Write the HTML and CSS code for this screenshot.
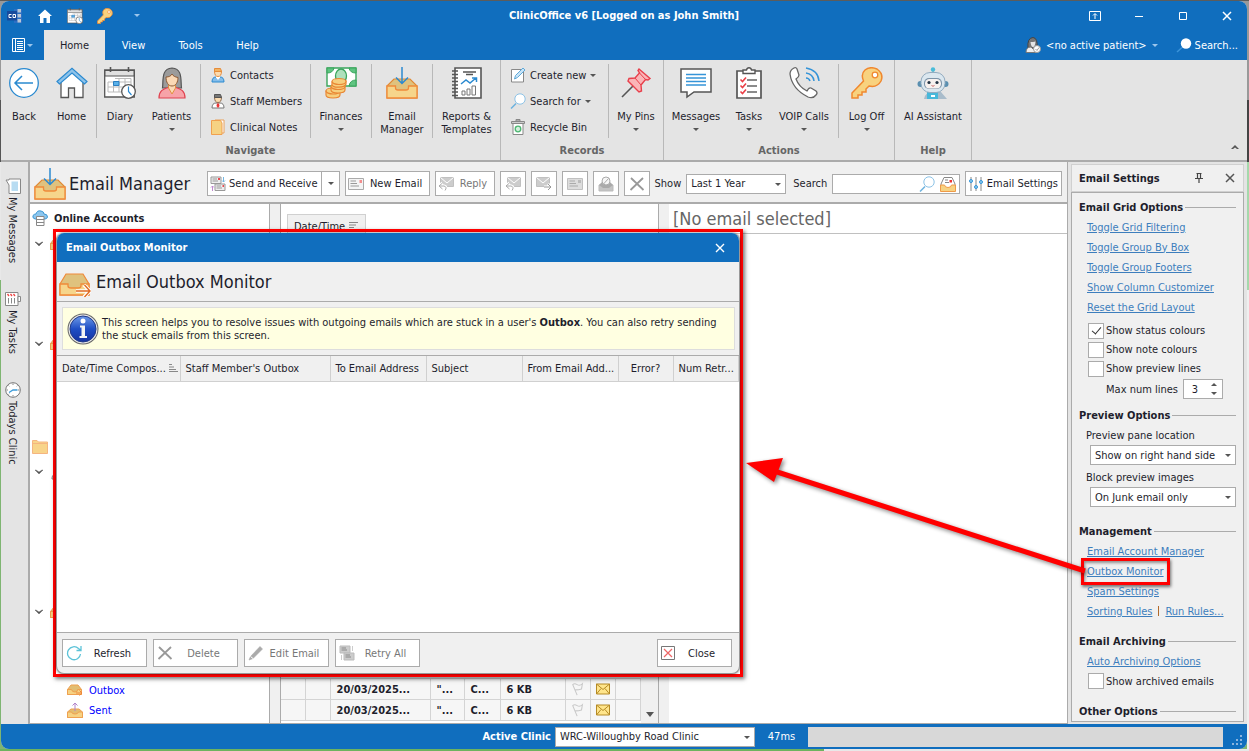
FILE: index.html
```html
<!DOCTYPE html>
<html lang="en">
<head>
<meta charset="utf-8">
<title>ClinicOffice v6</title>
<link rel="stylesheet" href="styles.css">
</head>
<body>
<svg class="sprite" aria-hidden="true">
  <symbol id="i-home" viewBox="0 0 32 32"><path d="M5 14V30.500H12.500V21H18.500V30.500H27V14L16 4Z" fill="#fff" stroke="#555" stroke-width="1.300"/><path d="M1 14.500L16 1.300L31 14.500L28.500 17L16 6L3.500 17Z" fill="#8ec3ea" stroke="#2b8ad0" stroke-width="1.200"/></symbol>
  <symbol id="i-back" viewBox="0 0 32 32"><circle cx="16" cy="16" r="14.300" fill="#fff" stroke="#2b8ad0" stroke-width="1.300"/><path d="M25 16H7M14 9L7 16L14 23" fill="none" stroke="#2b8ad0" stroke-width="1.500"/></symbol>
  <symbol id="i-diary" viewBox="0 0 32 32"><path d="M.7 3H30.300V30H.7Z" fill="#fff" stroke="#555" stroke-width="1.300"/><path d="M1 3.500H30V9H1Z" fill="#e0e0e0" stroke="#555"/><path d="M6.500 0V5M24.500 0V5" stroke="#555" stroke-width="1.600"/><path d="M11 11.500H27V25H4V15H27M4 20H27M4 25M9.500 15V25M15 11.500V25M21 11.500V25" fill="none" stroke="#bbb"/><path d="M9.500 14.500H15V18.500H9.500Z" fill="#5ab0e8" stroke="#2b7fc0"/><circle cx="24.500" cy="24.500" r="6.800" fill="#fff" stroke="#555" stroke-width="1.300"/><path d="M24.500 19.500V24.500L27.500 28" fill="none" stroke="#2b8ad0" stroke-width="1.200"/></symbol>
  <symbol id="i-patient" viewBox="0 0 32 32"><path d="M6.500 21C7.500 14 5 1.500 16 1C27 1.500 24.500 14 25.500 21Z" fill="#9b9b9b" stroke="#555" stroke-width="1.200"/><path d="M3 31C3 24 7 22 12 20.500H20C25 22 29 24 29 31Z" fill="#f7a3a8" stroke="#e04350" stroke-width="1.200"/><path d="M12.500 17V21L16 27L19.500 21V17Z" fill="#fbd9b5" stroke="#e0903f"/><path d="M10 10C13 10 15 9 16 7C17 9 19 10 22 10.500C22 15 20 19 16 19S10 15 10 10Z" fill="#fbd9b5" stroke="#8d5a35"/></symbol>
  <symbol id="i-money" viewBox="0 0 32 32"><path d="M2 1H31V19H2Z" fill="#fff" stroke="#3aa55c" stroke-width="1.400"/><path d="M2 1H9Q8 6 2 6ZM31 1H24Q25 6 31 6ZM31 19H24Q25 13 31 13Z" fill="#5fc481" stroke="#3aa55c"/><ellipse cx="16" cy="9" rx="5.500" ry="7" fill="#aee0bc" stroke="#3aa55c" stroke-width="1.300"/><g fill="#f6cf7e" stroke="#e98734" stroke-width="1.200"><path d="M1 24V28C1 32 15 32 15 28V24Z"/><ellipse cx="8" cy="24" rx="7" ry="3"/><path d="M6 20V23C6 27 20 27 20 23V20Z"/><ellipse cx="13" cy="19.500" rx="7" ry="3"/><path d="M7 15V18C8 21 20 21 21 17V14Z"/><ellipse cx="14" cy="14.500" rx="7" ry="3"/></g></symbol>
  <symbol id="i-inbox" viewBox="0 0 32 32"><path d="M1 19L8 12H24L31 19V31H1Z" fill="#dfc27e" stroke="#e08a35" stroke-width="1.200"/><path d="M1 19H9.500V21Q9.500 23 12 23H20Q22.500 23 22.500 21V19H31V31H1Z" fill="#f6d58b" stroke="#f08a3a" stroke-width="1.300"/><path d="M16 0V16M10 10.500L16 16.500L22 10.500" fill="none" stroke="#2b8ad0" stroke-width="1.500"/></symbol>
  <symbol id="i-outbox" viewBox="0 0 32 26"><path d="M1 11L7 1H24L30 11V22H1Z" fill="#dfc27e" stroke="#f08a3a" stroke-width="1.200"/><path d="M1 11H9V13Q9 15 12 15H19Q22 15 22 13V11H30V22H1Z" fill="#f6d58b" stroke="#f08a3a" stroke-width="1.300"/><path d="M17 18H31M25 12L31 18L25 24" fill="none" stroke="#fff" stroke-width="3.500"/><path d="M17 18H31M25.500 12L31 18L25.500 24" fill="none" stroke="#e06a20" stroke-width="1.400"/></symbol>
  <symbol id="i-report" viewBox="0 0 32 32"><path d="M4 1H30V31H4Z" fill="#fff" stroke="#555" stroke-width="1.600"/><path d="M1 4H7M1 7.500H7M1 11H7M1 14.500H7M1 18H7M1 21.500H7M1 25H7M1 28.500H7" stroke="#555" stroke-width="1.500"/><path d="M12 5H25M15 7.500H22" stroke="#555" stroke-width="1.300"/><path d="M10 17L15 13L19 16L25 11M21 11H25.500V15" fill="none" stroke="#2b8ad0" stroke-width="1.500"/><path d="M11 24H14V28H11ZM16 22H19V28H16ZM21 19H24.500V28H21Z" fill="#fff" stroke="#777"/></symbol>
  <symbol id="i-pin" viewBox="0 0 32 32"><path d="M13 19L2 30" stroke="#555" stroke-width="1.600"/><path d="M19 2L30 11.500L28 13L25.500 12.500L21 18L21.500 24L19 25L8 14L9 11.500L15 11L19.500 6L18 3.500Z" fill="#fbb5b7" stroke="#e8404c" stroke-width="1.400"/><path d="M15 11L21 18M19.500 6L25.500 12.500" stroke="#e8404c"/></symbol>
  <symbol id="i-message" viewBox="0 0 32 32"><path d="M1 2H31V25H14L7 30V25H1Z" fill="#fff" stroke="#555" stroke-width="1.500"/><path d="M6 7.500H26M6 11H26M6 14.500H26M6 18H26" stroke="#3594d8" stroke-width="1.300"/></symbol>
  <symbol id="i-tasks" viewBox="0 0 32 32"><path d="M4 4H28V31H4Z" fill="#fff" stroke="#555" stroke-width="1.700"/><path d="M10 6.500V3H13.500Q14 .7 16 .7T18.500 3H22V6.500Z" fill="#fff" stroke="#555" stroke-width="1.400"/><path d="M14 13H24M14 19H24M14 25H24" stroke="#666" stroke-width="1.500"/><path d="M7.500 12.500L9.500 14.500L13 10.500M7.500 18.500L9.500 20.500L13 16.500M7.500 24.500L9.500 26.500L13 22.500" fill="none" stroke="#ea3f46" stroke-width="1.600"/></symbol>
  <symbol id="i-phone" viewBox="0 0 32 32"><path d="M2 7Q2 3 6 1Q8 0 9 2L11 8Q11 10 8 12Q11 20 19 24Q21 20 23 21L28 24Q30 26 28 28Q25 32 20 30Q4 22 2 7Z" fill="#fff" stroke="#666" stroke-width="1.300"/><path d="M18 1Q30 3 31 14M18 6Q25 7 26 14M18 11Q21 11 22 14" fill="none" stroke="#3594d8" stroke-width="1.500"/></symbol>
  <symbol id="i-key" viewBox="0 0 32 32"><path d="M12.500 14Q9.500 7 14 3Q19-1 26 2Q33 7 30 14Q26 21 18 19L15 22V25H11V28H7V31H1V26Z" fill="#f8d27f" stroke="#f0882f" stroke-width="1.500"/><circle cx="24" cy="8" r="2.800" fill="#fff" stroke="#f0882f" stroke-width="1.300"/></symbol>
  <symbol id="i-robot" viewBox="0 0 32 32"><path d="M16 7V3" stroke="#789"/><circle cx="16" cy="2.500" r="2.200" fill="#49bcd9"/><path d="M7 32Q9 24 16 24T24 25L30 32Z" fill="#a9bccb"/><path d="M10 25H21V32H10Z" fill="#47b8da"/><path d="M14 28H18V30H14Z" fill="#fff"/><circle cx="3.500" cy="17" r="3" fill="#5a8fb0"/><circle cx="28.500" cy="17" r="3" fill="#5a8fb0"/><rect x="4" y="5.500" width="24" height="20" rx="9" fill="#dbe7ef" stroke="#92abbf"/><rect x="7" y="11" width="18" height="11" rx="5" fill="#7c93a8"/><rect x="8" y="12" width="16" height="9.500" rx="4.500" fill="#f7f1ef"/><circle cx="12" cy="15.500" r="1.600" fill="#234"/><circle cx="20" cy="15.500" r="1.600" fill="#234"/><path d="M14.500 18.500Q16 20 17.500 18.500" fill="none" stroke="#c66"/></symbol>
  <symbol id="i-contact" viewBox="0 0 16 16"><path d="M2 15Q2 10 6 10H10Q14 10 14 15Z" fill="#85bdea" stroke="#2b8ad0"/><path d="M6 9V10.500L8 13L10 10.500V9Z" fill="#fff"/><path d="M4.500 4Q8 2 11.500 4Q11.500 9.500 8 9.500T4.500 4Z" fill="#fbdcb0" stroke="#e58b3b"/><path d="M4.500 4.500V1.500H10.500L11.500 4.500Z" fill="#f3b360" stroke="#e58b3b"/></symbol>
  <symbol id="i-doctor" viewBox="0 0 16 16"><path d="M2 15Q2 10 6 10H10Q14 10 14 15Z" fill="#fff" stroke="#777"/><path d="M7 10.500H9L9.500 13L8 15L6.500 13Z" fill="#e33"/><path d="M4.500 4Q8 2 11.500 4Q11.500 9.500 8 9.500T4.500 4Z" fill="#fbdcb0" stroke="#8d6a50"/><path d="M4.500 4.500V1.500H10.500L11.500 4.500Z" fill="#777" stroke="#555"/></symbol>
  <symbol id="i-notes" viewBox="0 0 16 16"><path d="M5 1H14V14H5Z" fill="#fff" stroke="#e9a05a"/><path d="M1.500 1.500H10.500L12 4V15.500H1.500Z" fill="#f6d283" stroke="#f0a04f"/></symbol>
  <symbol id="i-create" viewBox="0 0 16 16"><path d="M1.500 2.500H13.500V15H1.500Z" fill="#fff" stroke="#888"/><path d="M4.500 12L5.500 8.500L13 1L15 3L7.500 10.500Z" fill="#c9e4f7" stroke="#5fa9d8"/></symbol>
  <symbol id="i-search" viewBox="0 0 16 16"><path d="M6 10.500L1 15.500" stroke="#6db2de" stroke-width="1.500"/><circle cx="10" cy="6" r="5.200" fill="#fff" stroke="#8cc2e6"/></symbol>
  <symbol id="i-bin" viewBox="0 0 16 16"><path d="M3 4.500H13V15.500H3Z" fill="#fff" stroke="#888"/><path d="M1.500 2.500H14.500V4.500H1.500ZM6 .5H10V2H6Z" fill="#ccc" stroke="#888"/><circle cx="8" cy="10" r="2.800" fill="#d4efdc" stroke="#4db672" stroke-width="1.300"/></symbol>
  <symbol id="i-mail" viewBox="0 0 16 12"><path d="M.5.5H15.500V11.500H.5Z" fill="#f4f4f4" stroke="#aaa"/><path d="M2.500 3H8M2.500 5.500H9M2.500 8H11" stroke="#999" stroke-width="1.200"/><path d="M11.500 2H14V5H11.500Z" fill="#f38d8d"/></symbol>
  <symbol id="i-mailg" viewBox="0 0 16 12"><path d="M.5.5H15.500V11.500H.5Z" fill="#ddd" stroke="#c0c0c0"/><path d="M2.500 3H8M2.500 5.500H9M2.500 8H11" stroke="#aaa" stroke-width="1.200"/><path d="M11 2H14V5H11Z" fill="#bbb"/></symbol>
  <symbol id="i-mails" viewBox="0 0 16 16"><path d="M1 1H11V7.500H1Z" fill="#eee" stroke="#999"/><path d="M5 8H15V14.500H5Z" fill="#eee" stroke="#999"/><path d="M2.500 3H7M2.500 5H8M6.500 10H11M6.500 12H12" stroke="#999"/><path d="M8 2H10V4H8ZM12.500 9H14V11H12.500Z" fill="#e8494f"/><path d="M13.500 1V6M12 4.500L13.500 6L15 4.500" fill="none" stroke="#74b7e2"/><path d="M2.500 15V10M1 11.500L2.500 10L4 11.500" fill="none" stroke="#c08ad0"/></symbol>
  <symbol id="i-mailsg" viewBox="0 0 16 16"><path d="M1 1H11V8H1Z" fill="#ccc" stroke="#bbb"/><path d="M5 8H15V15H5Z" fill="#ccc" stroke="#bbb"/><path d="M2.500 3H7M2.500 5H8M6.500 10H11M6.500 12H12" stroke="#888"/><path d="M13.500 1V6M2.500 15V10" stroke="#ccc"/></symbol>
  <symbol id="i-reply" viewBox="0 0 16 14"><path d="M2.500.5H15.500V9.500H2.500Z" fill="#ccc" stroke="#c0c0c0"/><path d="M2.500.5L9 6L15.500.5" fill="none" stroke="#fff"/><path d="M4.500 6L1 9L4.500 12M1 9H6Q9.500 10 7 13.500" fill="none" stroke="#fff" stroke-width="3"/><path d="M4.500 6L1 9L4.500 12M1 9H6Q9.500 10 7 13.500" fill="none" stroke="#aaa"/></symbol>
  <symbol id="i-forward" viewBox="0 0 16 14"><path d="M.5.5H13.500V9.500H.5Z" fill="#ccc" stroke="#c0c0c0"/><path d="M.5.5L7 6L13.500.5" fill="none" stroke="#fff"/><path d="M8 10H15M12 7L15 10L12 13" fill="none" stroke="#fff" stroke-width="3"/><path d="M8 10H15M12 7L15 10L12 13" fill="none" stroke="#999"/></symbol>
  <symbol id="i-junk" viewBox="0 0 16 16"><path d="M1 9H15V15H1Z" fill="#c4c4c4" stroke="#bbb"/><path d="M1 9L4 6H12L15 9L11 12H5Z" fill="#aaa"/><circle cx="8" cy="5" r="4" fill="#f6f6f6" stroke="#aaa"/><path d="M5.500 8L10.500 2.500" stroke="#aaa"/></symbol>
  <symbol id="i-x" viewBox="0 0 16 16"><path d="M2 2L14.500 14M14 2L1.500 14" stroke="#999" stroke-width="1.800"/></symbol>
  <symbol id="i-openmail" viewBox="0 0 16 16"><path d="M1 8L4 1.500H12L15 8V15H1Z" fill="#fff" stroke="#888"/><path d="M5 4H8M5 6.500H9" stroke="#888"/><path d="M9.500 4H12V6.500H9.500Z" fill="#e33"/><path d="M.5 9H4.500Q5 11.500 8 11.500T11.500 9H15.500V15.500H.5Z" fill="#f6d283" stroke="#ef9a48"/></symbol>
  <symbol id="i-sliders" viewBox="0 0 16 16"><path d="M3 1V15M8 1V15M13 1V15" stroke="#888"/><g fill="#8fd0f2" stroke="#3594d8"><circle cx="3" cy="5" r="1.500"/><circle cx="8" cy="11" r="1.500"/><circle cx="13" cy="6" r="1.500"/></g></symbol>
  <symbol id="i-cloud" viewBox="0 0 16 16"><path d="M3 9Q0 8 1 5.500Q2 4 4 4Q5 0 9 1Q12 1.500 12 4Q15.500 4 15.500 7Q15 9 13 9Z" fill="#8cc6ee" stroke="#3c97d4"/><path d="M4.500 6.500H12V15.500H4.500ZM4.500 9.500H12M4.500 12.500H12" fill="#fff" stroke="#888"/></symbol>
  <symbol id="i-tray" viewBox="0 0 16 12"><path d="M.5 5.500L4 1H12L15.500 5.500V11.500H.5Z" fill="#e2bd72" stroke="#efa04f"/><path d="M.5 5.500H4.500Q5 8 8 8T11.500 5.500H15.500V11.500H.5Z" fill="#f6d283" stroke="#efa04f"/></symbol>
  <symbol id="i-trayout" viewBox="0 0 16 12"><path d="M.5 5.500L4 1H11L14.500 5.500V10.500H.5Z" fill="#e2bd72" stroke="#efa04f"/><path d="M.5 5.500H4.500Q5 8 8 8T10.500 5.500H14.500V10.500H.5Z" fill="#f6d283" stroke="#efa04f"/><path d="M9 9H15M12.500 6.500L15 9L12.500 11.500" fill="none" stroke="#ef8538"/></symbol>
  <symbol id="i-sent" viewBox="0 0 16 16"><path d="M.5 10L4 7H12L15.500 10V15.500H.5Z" fill="#e2bd72" stroke="#efa04f"/><path d="M.5 10H4.500Q5 12 8 12T11.500 10H15.500V15.500H.5Z" fill="#f6d283" stroke="#efa04f"/><path d="M8 9V1M5.500 3.500L8 1L10.500 3.500" fill="none" stroke="#b183c9"/></symbol>
  <symbol id="i-folder" viewBox="0 0 16 14"><path d="M.5 13.500V.5H5L6.500 2H15.500V13.500Z" fill="#f8d48a" stroke="#f5b580"/><path d="M.5 3.500H15.500" stroke="#f5b580"/></symbol>
  <symbol id="i-chev" viewBox="0 0 8 6"><path d="M0 1L4 5L8 1L7 1L4 3L1 1Z" fill="#555" stroke="#555" stroke-width=".4"/></symbol>
  <symbol id="i-sort" viewBox="0 0 10 8"><path d="M0 .5H3M0 3H5M0 5.500H7M0 7.500H9" stroke="#888"/></symbol>
  <symbol id="i-sortd" viewBox="0 0 10 8"><path d="M0 .5H9M0 3H7M0 5.500H5M0 7.500H3" stroke="#888"/></symbol>
  <symbol id="i-refresh" viewBox="0 0 16 16"><path d="M14.500 9A6.500 6.500 0 1 1 12.500 3.500L15 5.500M15 1V5.500H10.500" fill="none" stroke="#5dc3d8" stroke-width="1.300"/></symbol>
  <symbol id="i-pencil" viewBox="0 0 16 16"><path d="M1 15L2.500 11.500L12 1.500L14.500 4L5 13.500Z" fill="#aaa" stroke="#aaa" stroke-width=".6"/><path d="M2.500 11.500L5 13.500" stroke="#fff"/></symbol>
  <symbol id="i-close" viewBox="0 0 14 14"><path d="M.5.5H13.500V13.500H.5Z" fill="#fff" stroke="#777"/><path d="M3 3L11 11M11 3L3 11" stroke="#e66" stroke-width="1.200"/></symbol>
  <symbol id="i-flag" viewBox="0 0 14 16"><path d="M6 15L1 3Q3 1 6 3T12 2L11 8Q8 9 4 9" fill="none" stroke="#c8c8c8" stroke-width="1.200"/></symbol>
  <symbol id="i-env" viewBox="0 0 14 11"><path d="M.5.5H13.500V10.500H.5Z" fill="#ffe58b" stroke="#b58a25"/><path d="M.5.5L7 6L13.500.5M.5 10.500L5 5M13.500 10.500L9 5" fill="none" stroke="#b58a25"/></symbol>
  <symbol id="i-info" viewBox="0 0 32 32"><defs><linearGradient id="blue" x1="0" y1="0" x2="0" y2="1"><stop offset="0" stop-color="#6d9ae8"/><stop offset=".5" stop-color="#1f4ec4"/><stop offset="1" stop-color="#1633a0"/></linearGradient></defs><circle cx="16" cy="16" r="15.500" fill="#666"/><circle cx="16" cy="16" r="14.500" fill="#e8e8e8"/><circle cx="16" cy="16" r="13" fill="url(#blue)" stroke="#223a88"/><circle cx="16" cy="8" r="2.500" fill="#fff"/><path d="M13 12.500H18V23H20V25H12.500V23H14.500V14.500H13Z" fill="#f4f4f4"/></symbol>
  <symbol id="i-clock" viewBox="0 0 16 16"><circle cx="8" cy="8" r="7.300" fill="#fff" stroke="#777"/><path d="M8 1.500V3M8 13V14.500M1.500 8H3M13 8H14.500M3.500 3.500L4.300 4.300M12.500 3.500L11.700 4.300M3.500 12.500L4.300 11.700" stroke="#888"/><path d="M4 10.500L8 8H12.500" fill="none" stroke="#3c9bd8" stroke-width="1.300"/></symbol>
  <symbol id="i-note" viewBox="0 0 16 16"><path d="M4 1H15.500V15.500H4V7L1 2H4Z" fill="#fff" stroke="#888"/><path d="M6.500 3.500H13V13H6.500Z" fill="#b8dcf2"/></symbol>
  <symbol id="i-list" viewBox="0 0 16 14"><path d="M.5.5H13V13.500H.5Z" fill="#fff" stroke="#888"/><path d="M13 4.500H15.500V9.500H13Z" fill="#fff" stroke="#888"/><path d="M3.500 6V11.500M6.500 6V11.500M9.500 6V11.500" stroke="#888"/><path d="M2.500 2L4 4M5.500 2L7 4M8.500 2L10 4" stroke="#e44" stroke-width="1.300"/></symbol>
</svg>

<div class="app">
  <header class="titlebar">
    <div class="quick">
      <svg class="s16" viewBox="0 0 16 16"><path d="M7 1H15V15H7Z" fill="#2c6fc4"/><path d="M10.500 1H14V4.500H10.500ZM10.500 6H14V9.500H10.500ZM10.500 11H14V14.500H10.500Z" fill="#b9c6d6"/><path d="M0 3H10V12.500H0Z" fill="#174a9c"/><path d="M4.500 6.500H2V9.500H4.500M6 6.500H8.500V9.500H6Z" fill="none" stroke="#fff"/></svg>
      <svg class="s16" viewBox="0 0 16 16"><path d="M1 8L8 1.500L15 8H13V15H9.500V10H6.500V15H3V8Z" fill="#fff"/></svg>
      <svg class="s16"><use href="#i-diary"/></svg>
      <svg class="s16"><use href="#i-key"/></svg>
      <span class="tri tri--pale"></span>
    </div>
    <h1 class="titlebar__text">ClinicOffice v6 [Logged on as John Smith]</h1>
    <div class="winbtns">
      <button aria-label="Ribbon display"><svg viewBox="0 0 12 10" width="12" height="10"><path d="M.5.5H11.500V9.500H.5ZM6 8V3M4 4.500L6 2.500L8 4.500" fill="none" stroke="#fff"/></svg></button>
      <button aria-label="Minimise"><svg viewBox="0 0 10 10" width="10" height="10"><path d="M1 5.500H9" stroke="#fff"/></svg></button>
      <button aria-label="Maximise"><svg viewBox="0 0 10 10" width="10" height="10"><path d="M1.500 1.500H8.500V8.500H1.500Z" fill="none" stroke="#fff"/></svg></button>
      <button aria-label="Close"><svg viewBox="0 0 10 10" width="10" height="10"><path d="M1 1L9 9M9 1L1 9" stroke="#fff" stroke-width="1.500"/></svg></button>
    </div>
  </header>
  <nav class="tabs">
    <button class="tabs__menu" aria-label="Application menu"><svg viewBox="0 0 13 14" width="13" height="14"><path d="M.5.5H12.500V13.500H.5ZM3.500 0V14M5 3.500H11M5 5.500H11M5 7.500H11M5 9.500H11M5 11.500H11" fill="none" stroke="#fff"/></svg><span class="tri tri--pale"></span></button>
    <button class="tab tab--on">Home</button>
    <button class="tab">View</button>
    <button class="tab">Tools</button>
    <button class="tab">Help</button>
    <div class="tabs__right">
      <button class="flat"><svg class="s16" viewBox="0 0 16 16"><path d="M3 11Q2 1 8 .5Q13 1 12 11Z" fill="#777" stroke="#444"/><path d="M1 15.500Q1 10 6 10L8 12L12 10V15.500Z" fill="#eee" stroke="#777"/><path d="M5.500 5Q8 5 10.500 4.500Q10 10 8 10T5.500 5Z" fill="#e6e6e6"/><circle cx="12" cy="12" r="3.500" fill="#fff" stroke="#999"/><path d="M10.500 12L12 13.500L14 10.500" fill="none" stroke="#999"/></svg>&lt;no active patient&gt;<span class="tri tri--pale"></span></button>
      <button class="flat"><svg class="s16" viewBox="0 0 16 16"><path d="M6 10.500L1 15" stroke="#3b94da" stroke-width="1.500"/><circle cx="10" cy="6.500" r="5.200" fill="#fff"/></svg>Search...</button>
    </div>
  </nav>

  <section class="ribbon" aria-label="Ribbon">
    <div class="group">
      <div class="group__items">
        <button class="big w46"><svg class="s32"><use href="#i-back"/></svg>Back</button>
        <button class="big w49"><svg class="s32"><use href="#i-home"/></svg>Home</button>
        <i class="sep"></i>
        <button class="big w46"><svg class="s32"><use href="#i-diary"/></svg>Diary</button>
        <button class="big w57"><svg class="s32"><use href="#i-patient"/></svg>Patients<span class="tri"></span></button>
        <i class="sep"></i>
        <div class="stack">
          <button class="small"><svg class="s16"><use href="#i-contact"/></svg>Contacts</button>
          <button class="small"><svg class="s16"><use href="#i-doctor"/></svg>Staff Members</button>
          <button class="small"><svg class="s16"><use href="#i-notes"/></svg>Clinical Notes</button>
        </div>
        <i class="sep"></i>
        <button class="big w60"><svg class="s32"><use href="#i-money"/></svg>Finances<span class="tri"></span></button>
        <i class="sep"></i>
        <button class="big w60"><svg class="s32"><use href="#i-inbox"/></svg>Email<br>Manager</button>
        <i class="sep"></i>
        <button class="big w67"><svg class="s32"><use href="#i-report"/></svg>Reports &amp;<br>Templates</button>
      </div>
      <div class="group__name">Navigate</div>
    </div>
    <div class="group">
      <div class="group__items">
        <div class="stack">
          <button class="small"><svg class="s16"><use href="#i-create"/></svg>Create new<span class="tri"></span></button>
          <button class="small"><svg class="s16"><use href="#i-search"/></svg>Search for<span class="tri"></span></button>
          <button class="small"><svg class="s16"><use href="#i-bin"/></svg>Recycle Bin</button>
        </div>
        <i class="sep"></i>
        <button class="big w54"><svg class="s32"><use href="#i-pin"/></svg>My Pins<span class="tri"></span></button>
      </div>
      <div class="group__name">Records</div>
    </div>
    <div class="group">
      <div class="group__items">
        <button class="big w64"><svg class="s32"><use href="#i-message"/></svg>Messages<span class="tri"></span></button>
        <button class="big w42"><svg class="s32"><use href="#i-tasks"/></svg>Tasks<span class="tri"></span></button>
        <button class="big w68"><svg class="s32"><use href="#i-phone"/></svg>VOIP Calls<span class="tri"></span></button>
        <i class="sep"></i>
        <button class="big w55"><svg class="s32"><use href="#i-key"/></svg>Log Off<span class="tri"></span></button>
      </div>
      <div class="group__name">Actions</div>
    </div>
    <div class="group">
      <div class="group__items">
        <button class="big w76"><svg class="s32"><use href="#i-robot"/></svg>AI Assistant</button>
      </div>
      <div class="group__name">Help</div>
    </div>
    <button class="collapse" aria-label="Collapse ribbon"><svg viewBox="0 0 8 6" width="8" height="6"><path d="M0 5L4 1L8 5L6 5L4 3.500L2 5Z" fill="#555"/></svg></button>
  </section>

  <div class="main">
    <nav class="rail">
      <button class="rail__tab"><svg class="s16"><use href="#i-note"/></svg>My Messages</button>
      <button class="rail__tab"><svg class="s16"><use href="#i-list"/></svg>My Tasks</button>
      <button class="rail__tab"><svg class="s16"><use href="#i-clock"/></svg>Todays Clinic</button>
    </nav>

    <main class="work">
      <div class="toolbar">
        <svg class="s32"><use href="#i-inbox"/></svg>
        <h2 class="heading">Email Manager</h2>
        <div class="split">
          <button class="btn"><svg class="s16"><use href="#i-mails"/></svg>Send and Receive</button>
          <button class="btn btn--drop" aria-label="More"><span class="tri"></span></button>
        </div>
        <button class="btn btn--wide"><svg class="s16"><use href="#i-mail"/></svg><span>New Email</span></button>
        <button class="btn btn--reply" disabled><svg class="s16"><use href="#i-reply"/></svg><span>Reply</span></button>
        <button class="btn btn--icon" disabled aria-label="Reply all"><svg class="s16"><use href="#i-reply"/></svg></button>
        <button class="btn btn--icon" disabled aria-label="Forward"><svg class="s16"><use href="#i-forward"/></svg></button>
        <button class="btn btn--icon" disabled aria-label="Mark"><svg class="s16"><use href="#i-mailg"/></svg></button>
        <button class="btn btn--icon" disabled aria-label="Junk"><svg class="s16"><use href="#i-junk"/></svg></button>
        <button class="btn btn--icon" disabled aria-label="Delete"><svg class="s16"><use href="#i-x"/></svg></button>
        <label for="show">Show</label>
        <span class="select select--show"><select id="show"><option>Last 1 Year</option></select></span>
        <label for="find" class="find-label">Search</label>
        <span class="find"><input id="find" type="text"><svg class="s16"><use href="#i-search"/></svg><svg class="s16"><use href="#i-openmail"/></svg></span>
        <button class="btn"><svg class="s16"><use href="#i-sliders"/></svg>Email Settings</button>
      </div>
      <div class="panes">
        <div class="tree">
          <div class="node node--root"><svg class="s16"><use href="#i-cloud"/></svg><b>Online Accounts</b></div>
          <div class="account"><div class="node node--acc"><svg class="chev"><use href="#i-chev"/></svg><svg class="s16"><use href="#i-tray"/></svg></div></div>
          <div class="account"><div class="node node--acc"><svg class="chev"><use href="#i-chev"/></svg><svg class="s16"><use href="#i-tray"/></svg></div></div>
          <div class="node node--folder"><svg class="s16"><use href="#i-folder"/></svg></div>
          <div class="account account--tall"><div class="node node--acc"><svg class="chev"><use href="#i-chev"/></svg><svg class="s16"><use href="#i-doctor"/></svg></div></div>
          <div class="account account--open"><div class="node node--acc"><svg class="chev"><use href="#i-chev"/></svg><svg class="s16"><use href="#i-tray"/></svg></div>
            <div class="leaves">
              <div class="node node--leaf"><svg class="s16"><use href="#i-tray"/></svg>Junk</div>
              <div class="node node--leaf"><svg class="s16"><use href="#i-trayout"/></svg>Outbox</div>
              <div class="node node--leaf"><svg class="s16"><use href="#i-sent"/></svg>Sent</div>
            </div>
          </div>
        </div>
        <div class="mails">
          <div class="mails__group"><span class="chip">Date/Time <svg class="sort"><use href="#i-sortd"/></svg></span></div>
          <div class="mails__body">
            <table class="mailtable">
              <colgroup><col class="c24"><col class="c25"><col class="c100"><col class="c34"><col class="c36"><col class="c65"><col class="c25"><col class="c25"><col></colgroup>
              <tr><td></td><td></td><td>20/03/2025...</td><td>"...</td><td>C...</td><td>6 KB</td><td><svg class="s14"><use href="#i-flag"/></svg></td><td><svg class="s14"><use href="#i-env"/></svg></td><td></td></tr>
              <tr><td></td><td></td><td>20/03/2025...</td><td>"...</td><td>C...</td><td>6 KB</td><td><svg class="s14"><use href="#i-flag"/></svg></td><td><svg class="s14"><use href="#i-env"/></svg></td><td></td></tr>
            </table>
            <div class="scroll"><span class="tri tri--scroll"></span></div>
          </div>
        </div>
        <div class="preview"><h2 class="preview__title">[No email selected]</h2></div>
      </div>
    </main>

    <aside class="settings">
      <header class="settings__head"><h2>Email Settings</h2>
        <button aria-label="Pin"><svg viewBox="0 0 8 10" width="8" height="10"><path d="M1.500.5H6.500M2.500.5V5.500M5.500.5V5.500M0 5.500H8M4 6V10" fill="none" stroke="#444" stroke-width="1.200"/></svg></button>
        <button aria-label="Close"><svg viewBox="0 0 10 10" width="10" height="10"><path d="M1 1L9 9M9 1L1 9" stroke="#555" stroke-width="1.500"/></svg></button>
      </header>
      <div class="settings__body">
        <h3>Email Grid Options</h3>
        <ul class="links">
          <li><a href="#">Toggle Grid Filtering</a></li>
          <li><a href="#">Toggle Group By Box</a></li>
          <li><a href="#">Toggle Group Footers</a></li>
          <li><a href="#">Show Column Customizer</a></li>
          <li><a href="#">Reset the Grid Layout</a></li>
        </ul>
        <div class="checks">
          <label class="check"><input type="checkbox" checked>Show status colours</label>
          <label class="check"><input type="checkbox">Show note colours</label>
          <label class="check"><input type="checkbox">Show preview lines</label>
        </div>
        <div class="lines"><label for="num">Max num lines</label><span class="spin"><input id="num" type="text" value="3"><span class="tri tri--up"></span><span class="tri"></span></span></div>
        <h3>Preview Options</h3>
        <label class="cap" for="loc">Preview pane location</label>
        <span class="select select--set"><select id="loc"><option>Show on right hand side</option></select></span>
        <label class="cap" for="blk">Block preview images</label>
        <span class="select select--set"><select id="blk"><option>On Junk email only</option></select></span>
        <h3 class="gap gap--big">Management</h3>
        <ul class="links">
          <li><a href="#">Email Account Manager</a></li>
          <li class="marked"><a href="#">Outbox Monitor</a></li>
          <li><a href="#">Spam Settings</a></li>
          <li><a href="#">Sorting Rules</a><span class="bar"></span><a href="#">Run Rules...</a></li>
        </ul>
        <h3 class="gap">Email Archiving</h3>
        <ul class="links"><li><a href="#">Auto Archiving Options</a></li></ul>
        <label class="check check--last"><input type="checkbox">Show archived emails</label>
        <h3 class="gap">Other Options</h3>
      </div>
    </aside>
  </div>

  <footer class="status">
    <label for="clinic">Active Clinic</label>
    <span class="select select--clinic"><select id="clinic"><option>WRC-Willoughby Road Clinic</option></select></span>
    <span class="status__ms">47ms</span>
    <span class="status__fill"></span>
    <svg class="grip" viewBox="0 0 11 11"><path d="M8 0H10V2H8ZM8 4H10V6H8ZM8 8H10V10H8ZM4 4H6V6H4ZM4 8H6V10H4ZM0 8H2V10H0Z" fill="#8bb4de"/></svg>
  </footer>

  <div class="frame">
    <div class="dialog" role="dialog" aria-label="Email Outbox Monitor">
      <header class="dialog__bar"><span>Email Outbox Monitor</span><button aria-label="Close"><svg viewBox="0 0 10 10" width="10" height="10"><path d="M1 1L9 9M9 1L1 9" stroke="#fff" stroke-width="1.400"/></svg></button></header>
      <div class="dialog__head"><svg class="outbox"><use href="#i-outbox"/></svg><h2 class="heading">Email Outbox Monitor</h2></div>
      <div class="dialog__info"><div class="info"><svg class="s32"><use href="#i-info"/></svg><p>This screen helps you to resolve issues with outgoing emails which are stuck in a user's <b>Outbox</b>. You can also retry sending the stuck emails from this screen.</p></div></div>
      <div class="dialog__grid">
        <table class="outtable">
          <colgroup><col class="c123"><col class="c150"><col class="c96"><col class="c96"><col class="c96"><col class="c55"><col></colgroup>
          <thead><tr><th>Date/Time Compos... <svg class="sort"><use href="#i-sort"/></svg></th><th>Staff Member's Outbox</th><th>To Email Address</th><th>Subject</th><th>From Email Add...</th><th class="mid">Error?</th><th>Num Retr...</th></tr></thead>
        </table>
      </div>
      <footer class="dialog__foot">
        <button class="cmd"><svg class="s16"><use href="#i-refresh"/></svg><span>Refresh</span></button>
        <button class="cmd" disabled><svg class="s16"><use href="#i-x"/></svg><span>Delete</span></button>
        <button class="cmd" disabled><svg class="s16"><use href="#i-pencil"/></svg><span>Edit Email</span></button>
        <button class="cmd" disabled><svg class="s16"><use href="#i-mailsg"/></svg><span>Retry All</span></button>
        <button class="cmd cmd--close"><svg class="s14"><use href="#i-close"/></svg><span>Close</span></button>
      </footer>
    </div>
  </div>
  <svg class="arrow" viewBox="0 0 346 130"><path d="M340 112L26 11" stroke="#f00" stroke-width="5"/><path d="M1 4L38-1L29 23Z" fill="#f00"/></svg>
</div>
</body>
</html>
```
FILE: styles.css
```css
:root {
  --blue: #106ebe;
  --line: #ababab;
  --face: #f0f0f0;
  --ribbon: #e4e4e4;
}
*, *::before { box-sizing: border-box; }
body {
  margin: 0;
  height: 100vh;
  padding: 1px 2px 2px 1px;
  overflow: hidden;
  background:
    linear-gradient(#5c5c5c, #5c5c5c) top / 100% 1px no-repeat,
    linear-gradient(90deg, #6db35f 66%, #e8e8e8 66%) bottom / 100% 2px no-repeat,
    linear-gradient(#999 0 100px, #444 100px 162px, #a5d8ab 162px 290px, #efefef 290px) right / 2px 100% no-repeat,
    linear-gradient(#999 0 100px, #555 100px 162px, #e8e8e8 162px 280px, #7fb572 280px);
  color: #1e1e2c;
  font: 11px/13px "DejaVu Sans Condensed", "Noto Sans", sans-serif;
}
button, input, select { font: inherit; color: inherit; }
button { border: 0; padding: 0; background: none; }
h1, h2, h3, p, ul { margin: 0; padding: 0; font-size: inherit; font-weight: normal; }
ul { list-style: none; }
svg { flex: none; display: block; }
.sprite { position: absolute; width: 0; height: 0; }
.s14 { width: 14px; height: 14px; }
.s16 { width: 16px; height: 16px; }
.s32 { width: 32px; height: 32px; }
.tri { width: 0; border: 3px solid transparent; border-top-color: #555; border-bottom: 0; }
.tri--pale { border-top-color: #9cc6ec; }
.tri--up { border-top: 0; border-bottom: 3px solid #555; }
.tri--scroll { border-width: 5px 4px 0; }

.app { position: relative; height: 100%; display: flex; flex-direction: column; border-radius: 8px; overflow: hidden; background: var(--ribbon); }

.titlebar { height: 29px; display: grid; grid-template-columns: 1fr auto 1fr; align-items: center; background: var(--blue); color: #fff; }
.titlebar__text { font-weight: bold; }
.quick { display: flex; align-items: center; gap: 14px; padding-left: 6px; }
.quick .tri { margin-left: 7px; }
.winbtns { display: flex; justify-content: flex-end; gap: 4px; }
.winbtns button { width: 40px; height: 29px; display: flex; align-items: center; justify-content: center; }
.tabs { height: 30px; display: flex; background: var(--blue); color: #fff; }
.tabs__menu { width: 43px; display: flex; align-items: center; gap: 2px; padding-left: 11px; }
.tab { width: 57px; }
.tab--on { width: 61px; background: var(--ribbon); color: #1e1e2c; }
.tabs__right { margin-left: auto; display: flex; gap: 18px; padding-right: 9px; }
.flat { display: flex; align-items: center; gap: 5px; }
.flat:last-child { gap: 3px; }

.ribbon { display: flex; height: 102px; flex: none; border-bottom: 2px solid var(--line); }
.group { display: flex; flex-direction: column; border-right: 1px solid #b8b8b8; }
.group__items { display: flex; flex: none; height: 81px; padding-top: 4px; }
.group__name { text-align: center; font-weight: bold; color: #666; line-height: 20px; }
.sep { width: 1px; height: 74px; background: #b8b8b8; }
.big { display: flex; flex-direction: column; align-items: center; padding-top: 3px; text-align: center; white-space: nowrap; }
.big .s32 { margin-bottom: 11px; }
.big .tri { margin-top: 5px; }
.w42 { width: 42px; } .w46 { width: 46px; } .w49 { width: 49px; } .w54 { width: 54px; } .w55 { width: 55px; }
.w57 { width: 57px; } .w60 { width: 60px; } .w64 { width: 64px; } .w67 { width: 67px; } .w68 { width: 68px; } .w76 { width: 76px; }
.stack { padding-left: 9px; display: flex; flex-direction: column; width: 109px; margin-top: -2px; }
.group:nth-child(2) .stack { width: 107px; }
.small { display: flex; align-items: center; gap: 4px; height: 26px; flex: none; white-space: nowrap; }
.collapse { margin: auto 8px 10px auto; }

.main { flex: 1; min-height: 0; display: flex; }
.rail { width: 27px; flex: none; padding-top: 16px; display: flex; flex-direction: column; gap: 28px; }
.rail__tab { writing-mode: vertical-rl; display: flex; align-items: center; gap: 3px; width: 23px; white-space: nowrap; }
.work { flex: 1; min-width: 0; display: flex; flex-direction: column; border-left: 2px solid var(--line); border-right: 1px solid var(--line); border-bottom: 1px solid var(--line); }
.toolbar { height: 42px; flex: none; display: flex; align-items: center; gap: 5px; padding: 3px 5px 0 4px; background: var(--face); border-bottom: 2px solid var(--line); white-space: nowrap; }
.heading { font-size: 18px; line-height: 24px; }
.toolbar .heading { width: 133px; margin-left: -2px; }
.split { display: flex; }
.btn { height: 25px; flex: none; display: flex; align-items: center; gap: 3px; padding: 0 3px 0 2px; background: #fff; border: 1px solid var(--line); }
.btn:disabled, .cmd:disabled { color: #777; }
.btn--drop { width: 18px; padding: 0 6px; border-left: 0; }
.btn--wide { width: 85px; }
.btn--reply { width: 60px; }
.btn--wide span, .btn--reply span { flex: 1; text-align: center; }
.btn--icon { width: 26px; padding: 0 4px; }
.toolbar > .btn:last-child { margin-left: auto; }
.select { position: relative; display: block; }
.select select { appearance: none; width: 100%; height: 20px; padding: 0 4px; background: #fff; border: 1px solid var(--line); border-radius: 0; }
.select::after { content: ""; position: absolute; right: 5px; top: 9px; border: 3px solid transparent; border-top-color: #555; border-bottom: 0; }
.select--show { width: 100px; }
.find-label { padding-left: 2px; }
.find { flex: 1; min-width: 60px; max-width: 130px; height: 20px; display: flex; align-items: center; gap: 5px; padding-right: 3px; background: #fff; border: 1px solid var(--line); }
.find input { flex: 1; min-width: 0; border: 0; outline: 0; }

.panes { flex: 1; min-height: 0; display: flex; background: var(--face); }
.tree { width: 240px; flex: none; background: #fff; border-right: 1px solid var(--line); padding-top: 4px; overflow: hidden; }
.node { height: 20px; display: flex; align-items: center; }
.node--root { gap: 6px; padding-left: 2px; margin-bottom: 6px; }
.node--acc { gap: 7px; padding-left: 5px; }
.chev { width: 8px; height: 6px; }
.node--folder { padding-left: 2px; margin: 3px 0 5px; }
.node--leaf { gap: 6px; padding-left: 37px; color: #00f; }
.account { height: 100px; }
.account--tall { height: 140px; }
.leaves { padding-top: 38px; }
.mails { width: 379px; flex: none; margin-left: 10px; display: flex; flex-direction: column; background: #fff; border: solid var(--line); border-width: 0 1px; }
.mails__group { padding: 10px 6px; background: #fff; }
.chip { display: inline-flex; align-items: center; gap: 4px; height: 24px; padding: 0 6px; background: var(--face); border: 1px solid #d0d0d0; }
.sort { width: 10px; height: 8px; display: inline-block; }
.mails__body { flex: 1; display: flex; align-items: flex-end; padding-bottom: 0; }
.mailtable { flex: 1; table-layout: fixed; border-collapse: collapse; font-weight: bold; background: #f6f6f6; margin-bottom: 2px; }
.mailtable td { height: 21px; padding: 0 6px; border: 1px solid #d4d4d4; border-left: 0; white-space: nowrap; }
.mailtable td svg { margin: 0 -1px; }
.c24 { width: 24px; } .c25 { width: 25px; } .c34 { width: 34px; } .c36 { width: 36px; } .c55 { width: 55px; } .c65 { width: 65px; }
.c96 { width: 96px; } .c100 { width: 100px; } .c123 { width: 123px; } .c150 { width: 150px; }
.scroll { width: 17px; align-self: stretch; display: flex; align-items: flex-end; justify-content: center; background: var(--face); padding-bottom: 6px; }
.preview { flex: 1; margin-left: 10px; background: #fff; }
.preview__title { height: 30px; padding-left: 4px; color: #666; font-size: 18px; line-height: 30px; border-bottom: 1px solid #c0c0c0; }

.settings { width: 179px; flex: none; padding: 2px 3px 2px; display: flex; flex-direction: column; white-space: nowrap; }
.settings__head { height: 28px; display: flex; align-items: center; gap: 22px; padding: 0 8px 0 7px; background: var(--face); border: 1px solid #d0d0d0; }
.settings__head h2 { flex: 1; font-weight: bold; }
.settings__body { flex: 1; min-height: 0; padding: 4px 7px 0 7px; background: var(--face); border: 1px solid var(--line); overflow: hidden; }
.settings h3 { display: flex; align-items: center; gap: 2px; height: 20px; font-weight: bold; }
.settings h3::after { content: ""; flex: 1; height: 1px; background: var(--line); }
.settings h3.gap { margin-top: 10px; }
.settings h3.gap--big { margin-top: 14px; }
.links li { position: relative; height: 20px; padding-left: 8px; display: flex; align-items: center; }
.links a { color: #3d7ebd; text-decoration: underline; }
.bar { width: 1px; height: 10px; margin: 0 6px; background: #b26a2a; }
.marked::before { content: ""; position: absolute; left: 2px; top: -3px; width: 89px; height: 27px; border: 3px solid #f00; box-shadow: 1px 2px 3px #0008, inset 1px 2px 3px #0006; }
.checks { padding-top: 4px; }
.check { height: 19px; display: flex; align-items: center; gap: 2px; padding-left: 9px; }
.check--last { margin-bottom: 11px; padding-top: 1px; }
.check--last + h3.gap { margin-top: 0; }
.check input { appearance: none; width: 16px; height: 16px; margin: 0; background: #fff; border: 1px solid var(--line); display: grid; place-items: center; }
.check input:checked::before { content: ""; width: 5px; height: 9px; margin-bottom: 3px; border: solid #333; border-width: 0 1px 1px 0; transform: rotate(40deg); }
.lines { display: flex; align-items: center; justify-content: flex-end; gap: 5px; padding-right: 13px; margin: 1px 0 6px; }
.spin { width: 40px; height: 20px; display: grid; grid-template-columns: 1fr 16px; grid-template-rows: 1fr 1fr; place-items: center; background: #fff; border: 1px solid var(--line); }
.spin input { grid-row: 1 / 3; width: 22px; border: 0; padding: 0; text-align: center; background: none; }
.cap { display: block; height: 20px; line-height: 22px; padding-left: 7px; }
.select--set { margin: 0 0 2px 11px; }

.status { height: 25px; flex: none; display: flex; align-items: center; background: var(--blue); color: #fff; padding-right: 4px; }
.status label { width: 554px; padding-right: 4px; text-align: right; font-weight: bold; }
.select--clinic { width: 200px; color: #1e1e2c; }
.status__ms { width: 53px; text-align: center; }
.status__fill { flex: 1; height: 20px; background: #d8d8d8; }
.grip { width: 11px; height: 11px; margin: 8px 0 0 9px; }

.frame { position: absolute; left: 52px; top: 228px; width: 690px; height: 448px; padding-top: 1px; border: 3px solid #f00; box-shadow: 2px 2px 4px #0008; }
.dialog { height: 100%; display: flex; flex-direction: column; background: var(--face); border: 1px solid #999; border-top: 0; border-radius: 8px; overflow: hidden; box-shadow: 0 0 3px #0009; }
.dialog__bar { height: 29px; display: flex; align-items: center; justify-content: space-between; padding: 0 14px 0 9px; background: var(--blue); color: #fff; font-weight: bold; }
.dialog__head { height: 40px; display: flex; align-items: center; gap: 5px; padding: 0 2px; border-bottom: 1px solid var(--line); }
.outbox { width: 32px; height: 26px; margin-top: 8px; }
.dialog__info { padding: 5px 4px 5px 5px; border-bottom: 1px solid var(--line); }
.info { display: flex; align-items: center; gap: 3px; height: 43px; padding: 0 0 0 4px; background: #ffffe1; border: 1px solid #ddd; }
.dialog__grid { flex: 1; background: #fff; border-bottom: 1px solid var(--line); }
.outtable { width: 100%; table-layout: fixed; border-collapse: collapse; background: var(--face); }
.outtable th { height: 25px; padding: 0 0 0 5px; text-align: left; font-weight: normal; white-space: nowrap; border: solid #d0d0d0; border-width: 0 1px 1px 0; }
.outtable th.mid { text-align: center; padding: 0; }
.dialog__foot { height: 40px; display: flex; gap: 6px; padding: 6px 7px 5px 5px; }
.cmd { width: 85px; height: 28px; display: flex; align-items: center; padding: 0 3px; background: #fff; border: 1px solid var(--line); }
.cmd span { flex: 1; text-align: center; }
.cmd--close { width: 75px; margin-left: auto; }
.arrow { position: absolute; left: 744px; top: 458px; width: 346px; height: 130px; overflow: visible; filter: drop-shadow(2px 2px 2px #0007); pointer-events: none; }
```
